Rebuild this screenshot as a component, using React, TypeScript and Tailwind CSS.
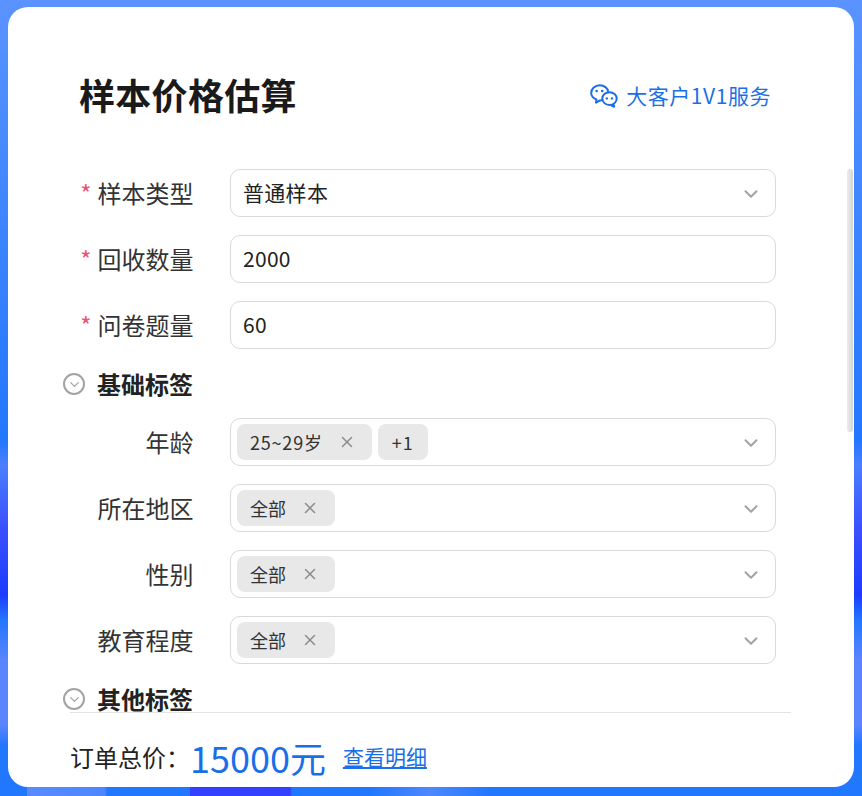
import { ChevronDown, X } from 'lucide-react';
import type { ReactNode } from 'react';

const font = "font-['Noto_Sans_CJK_SC','Noto_Sans',sans-serif]";

function WechatIcon() {
  return (
    <svg width="28" height="24" viewBox="0 0 28 24" fill="none" stroke="currentColor" strokeWidth="2" className="mr-[8px]">
      <path d="M15.5 14.9C13.9 16 12 16.6 9.8 16.5L6 18.6 6.4 15.4C3.2 14 1.2 11.6 1.2 8.9 1.2 4.8 5 1.2 9.8 1.2 14.2 1.2 17.8 4.1 18.2 7.8" strokeLinejoin="round" />
      <ellipse cx="19.5" cy="14.6" rx="7.2" ry="6.4" fill="white" />
      <path d="M23.4 20 24.2 22.8 20.8 21" strokeLinejoin="round" />
      <circle cx="6.6" cy="7" r="1.3" fill="currentColor" stroke="none" />
      <circle cx="12.2" cy="7" r="1.3" fill="currentColor" stroke="none" />
      <circle cx="16.8" cy="14.4" r="1.2" fill="currentColor" stroke="none" />
      <circle cx="22" cy="14.4" r="1.2" fill="currentColor" stroke="none" />
    </svg>
  );
}

function Row({ label, required, children }: { label: string; required?: boolean; children: ReactNode }) {
  return (
    <div className="flex items-center h-12 mb-[18px]">
      <div className="w-[131.5px] text-right text-[24px] leading-none text-[#333] shrink-0">
        {required && <span className="text-[#f0506e] mr-[6px]">*</span>}
        {label}
      </div>
      <div className="ml-[36.5px] w-[546px] h-12 rounded-[10px] border border-[#d9d9d9] bg-white flex items-center justify-between pl-[6px] pr-[13px]">
        {children}
      </div>
    </div>
  );
}

function Arrow() {
  return <ChevronDown size={22} strokeWidth={2.2} className="text-[#a3a3a3] mt-[1px]" />;
}

function Value({ text, arrow }: { text: string; arrow?: boolean }) {
  return (
    <>
      <span className="pl-[6px] text-[21px] text-[#222] tracking-[0.3px]">{text}</span>
      {arrow && <Arrow />}
    </>
  );
}

function Tag({ text, closable = true, wide }: { text: string; closable?: boolean; wide?: boolean }) {
  return (
    <span className="h-9 rounded-lg bg-[#e8e8e8] flex items-center px-[13px] text-[18px] text-[#333]">
      <span className={wide ? 'tracking-[0.8px]' : ''}>{text}</span>
      {closable && <X size={18} className="ml-[15px] mr-[3px] text-[#8c8c8c]" />}
    </span>
  );
}

function Tags({ items, more }: { items: { text: string; wide?: boolean }[]; more?: string }) {
  return (
    <>
      <div className="flex items-center gap-[6px]">
        {items.map((t) => (
          <Tag key={t.text} text={t.text} wide={t.wide} />
        ))}
        {more && (
          <span className="h-9 w-[50px] rounded-lg bg-[#e8e8e8] flex items-center justify-center text-[18px] text-[#333] tracking-[1px]">
            {more}
          </span>
        )}
      </div>
      <Arrow />
    </>
  );
}

function Section({ title }: { title: string }) {
  return (
    <div className="flex items-center h-6 mt-[23px] mb-[22px]">
      <span className="w-[22px] h-[22px] rounded-full border-2 border-[#a3a3a3] flex items-center justify-center ml-[1px]">
        <ChevronDown size={15} className="text-[#a3a3a3]" />
      </span>
      <span className="ml-[12px] text-[24px] font-bold text-[#222] leading-none">{title}</span>
    </div>
  );
}

export default function App() {
  return (
    <div
      className={`${font} w-[862px] h-[796px] pt-[7px] pl-[8px] overflow-hidden bg-no-repeat [background-size:100%_10px,100%_100%] [background-position:0_100%,0_0] bg-[linear-gradient(90deg,#2277ff_27px,#5a8aff_27px,#4c87ff_105px,#2277ff_107px,#2277ff_190px,#3340ff_190px,#3340ff_290px,#2277ff_292px,#2277ff_370px,#4d88ff_430px,#2277ff_490px),linear-gradient(180deg,#5a93ff_0,#2277ff_440px,#4a7fff_465px,#3a4fff_530px,#1c3cff_595px,#2277ff_620px,#5a85ff_660px,#5a85ff_725px,#2277ff_745px)]`}
    >
      <div className="relative w-[846px] h-[780px] rounded-[20px] bg-white flex flex-col overflow-hidden">
        <div className="flex items-center justify-between h-[162px] pl-[71px] pr-[83px] pt-[16px] shrink-0">
          <h1 className="text-[36px] font-bold text-[#1a1a1a] leading-none mb-[4px] tracking-[0.3px]">样本价格估算</h1>
          <div className="flex items-center text-[21px] text-[#1a6fe8] tracking-[0.55px]">
            <WechatIcon />
            大客户1V1服务
          </div>
        </div>

        <div className="flex-1 min-h-0 pl-[54px]">
          <Row label="样本类型" required>
            <Value text="普通样本" arrow />
          </Row>
          <Row label="回收数量" required>
            <Value text="2000" />
          </Row>
          <Row label="问卷题量" required>
            <Value text="60" />
          </Row>
          <Section title="基础标签" />
          <Row label="年龄">
            <Tags items={[{ text: '25~29岁', wide: true }]} more="+1" />
          </Row>
          <Row label="所在地区">
            <Tags items={[{ text: '全部' }]} />
          </Row>
          <Row label="性别">
            <Tags items={[{ text: '全部' }]} />
          </Row>
          <Row label="教育程度">
            <Tags items={[{ text: '全部' }]} />
          </Row>
          <Section title="其他标签" />
        </div>

        <div className="ml-[62px] mr-[63px] border-t border-[#e3e3e3] h-[75px] pt-[14px] flex items-center shrink-0">
          <span className="text-[24px] text-[#222]">{'订单总价\uFF1A'}</span>
          <span className="text-[36px] leading-none text-[#1a6fe8]">15000元</span>
          <span className="ml-[17px] text-[21px] text-[#1a6fe8] underline">查看明细</span>
        </div>

        {/* overlay scrollbar */}
        <div className="absolute right-[1px] top-[162px] w-[6px] h-[263px] rounded-full bg-gradient-to-r from-[#ececec] to-[#d4d4d4]" />
      </div>
    </div>
  );
}
